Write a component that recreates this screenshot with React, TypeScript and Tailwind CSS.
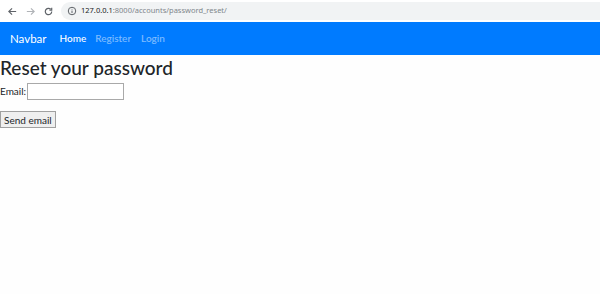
import React from "react";

export default function App() {
  return (
    <div className="w-[600px] h-[294px] bg-[#fefefe] overflow-hidden" style={{ fontFamily: 'Lato, "Noto Sans", sans-serif' }}>
      {/* Browser toolbar */}
      <div className="h-[22px] bg-white flex items-center">
        <div className="flex items-center gap-[7px] pl-[7px] pr-[7px] text-[#5f6368]">
          <svg width="11" height="11" viewBox="0 0 24 24" fill="none" stroke="#5f6368" strokeWidth="2.5">
            <path d="M20 12H5M11 5l-7 7 7 7" />
          </svg>
          <svg width="11" height="11" viewBox="0 0 24 24" fill="none" stroke="#b0b3b7" strokeWidth="2.5">
            <path d="M4 12h15M13 5l7 7-7 7" />
          </svg>
          <svg width="11" height="11" viewBox="0 0 24 24" fill="none" stroke="#5f6368" strokeWidth="2.6">
            <path d="M19 12a7 7 0 1 1-2.1-5" />
            <path d="M19 4v5h-5" fill="none" />
          </svg>
        </div>
        <div className="flex-1 h-[18px] bg-[#f1f3f4] rounded-l-full flex items-center pl-[6px] gap-[4px]">
          <svg width="10" height="10" viewBox="0 0 24 24" fill="none" stroke="#5f6368" strokeWidth="2.4">
            <circle cx="12" cy="12" r="9" />
            <path d="M12 11v6M12 7v1.5" />
          </svg>
          <span className="text-[7.5px] leading-none text-[#202124]" style={{ fontFamily: '"Noto Sans", sans-serif' }}>
            127.0.0.1<span className="text-[#80868b]">:8000/accounts/password_reset/</span>
          </span>
        </div>
      </div>
      {/* Navbar */}
      <div className="h-[33px] bg-[#007bff] flex items-center pl-[10px]">
        <span className="text-white text-[11.5px] mr-[13px]">Navbar</span>
        <span className="text-white text-[10px] font-medium mr-[9px]">Home</span>
        <span className="text-white/50 text-[10px] font-medium mr-[10px]">Register</span>
        <span className="text-white/50 text-[10px] font-medium">Login</span>
      </div>
      {/* Content */}
      <div className="text-[#212529]">
        <h1 className="text-[19px] leading-[25px] font-medium">Reset your password</h1>
        <div className="flex items-center h-[20px] text-[10px] mt-[1px]">
          <span>Email:</span>
          <input className="ml-[1px] w-[97px] h-[17px] border border-[#a9a9a9] bg-white" />
        </div>
        <button className="mt-[10px] h-[17px] px-[3px] text-[10px] bg-[#efefef] border border-[#a0a0a0] leading-none">Send email</button>
      </div>
    </div>
  );
}
